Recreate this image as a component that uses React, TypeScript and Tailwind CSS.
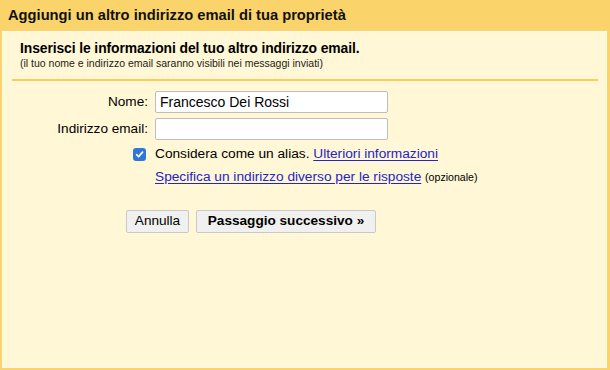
import React from "react";

export default function App() {
  return (
    <div
      className="w-[610px] h-[370px] bg-[#fbd36b] flex flex-col text-black"
      style={{ fontFamily: '"Liberation Sans", Arial, sans-serif' }}
    >
      <div className="h-[31px] shrink-0 pl-[8px] pt-[6px] text-[14.7px] font-bold leading-[19px] text-[#111]">
        Aggiungi un altro indirizzo email di tua proprietà
      </div>
      <div className="flex-1 ml-[2px] mr-[3px] mb-[2px] bg-[#fff7d6] border border-[#fffbea] flex flex-col">
        <div className="pl-[17px] pt-[8px]">
          <div className="text-[13.9px] font-bold leading-[17px] tracking-[-0.1px]">
            Inserisci le informazioni del tuo altro indirizzo email.
          </div>
          <div className="text-[10.5px] leading-[13px] text-[#222]">
            (il tuo nome e indirizzo email saranno visibili nei messaggi inviati)
          </div>
        </div>
        <div className="mt-[9px] ml-[9px] mr-[8px] h-[2px] bg-[#f8cd5c]" />
        <div className="mt-[10px] flex flex-col">
          <div className="flex items-center h-[22px]">
            <div className="w-[147px] text-right text-[13.6px] pr-[2px]">Nome:</div>
            <div className="ml-[5px] w-[233px] h-[22px] bg-white border border-[#bdbdbd] rounded-[2px] flex items-center px-[4px] text-[14px]">
              Francesco Dei Rossi
            </div>
          </div>
          <div className="flex items-center h-[22px] mt-[5px]">
            <div className="w-[147px] text-right text-[13.6px] pr-[2px]">Indirizzo email:</div>
            <div className="ml-[5px] w-[233px] h-[22px] bg-white border border-[#bdbdbd] rounded-[2px]" />
          </div>
          <div className="flex items-center h-[20px] mt-[4px]">
            <div className="w-[147px] flex justify-end pr-[4px]">
              <div className="w-[13px] h-[13px] rounded-[3px] bg-[#2f76d9] flex items-center justify-center">
                <svg width="9" height="9" viewBox="0 0 10 10">
                  <path d="M1.8 5.2 L4 7.4 L8.4 2.4" fill="none" stroke="white" strokeWidth="1.8" strokeLinecap="round" strokeLinejoin="round" />
                </svg>
              </div>
            </div>
            <div className="ml-[5px] text-[13.7px] whitespace-nowrap">
              Considera come un alias.{" "}
              <span className="text-[#2424c9] underline underline-offset-2">Ulteriori informazioni</span>
            </div>
          </div>
          <div className="flex items-center h-[20px] mt-[3px]">
            <div className="w-[147px]" />
            <div className="ml-[5px] text-[13.7px] whitespace-nowrap">
              <span className="text-[#2424c9] underline underline-offset-2">
                Specifica un indirizzo diverso per le risposte
              </span>{" "}
              <span className="text-[10.6px]">(opzionale)</span>
            </div>
          </div>
          <div className="flex mt-[23px] ml-[123px] gap-[7px]">
            <div className="w-[63px] h-[23px] bg-[#f0f0f0] border border-[#c9c9c9] rounded-[2px] flex items-center justify-center text-[13.6px]">
              Annulla
            </div>
            <div className="w-[180px] h-[23px] bg-[#f0f0f0] border border-[#c9c9c9] rounded-[2px] flex items-center justify-center text-[13.6px] font-bold">
              Passaggio successivo »
            </div>
          </div>
        </div>
      </div>
    </div>
  );
}
